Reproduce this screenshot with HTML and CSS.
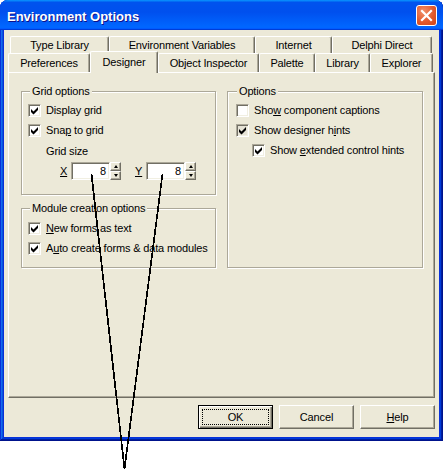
FILE: index.html
```html
<!DOCTYPE html>
<html lang="en">
<head>
<meta charset="utf-8">
<title>Environment Options</title>
<link rel="stylesheet" href="styles.css">
</head>
<body>
<div class="window">
  <div class="titlebar">
    <span class="title">Environment Options</span>
    <span class="close" aria-label="Close">
      <svg width="19" height="19" viewBox="0 0 19 19"><path d="M5 5 L14 14 M14 5 L5 14" stroke="#fff" stroke-width="2.2" stroke-linecap="square" fill="none"/></svg>
    </span>
  </div>
  <div class="body">
    <div class="tabrow back">
      <div class="tab w99">Type Library</div>
      <div class="tab w146">Environment Variables</div>
      <div class="tab w77">Internet</div>
      <div class="tab w100">Delphi Direct</div>
    </div>
    <div class="tabrow front">
      <div class="tab w82">Preferences</div>
      <div class="tab w68 sel">Designer</div>
      <div class="tab w101">Object Inspector</div>
      <div class="tab w56">Palette</div>
      <div class="tab w55">Library</div>
      <div class="tab w63">Explorer</div>
    </div>
    <div class="panel">
      <div class="col">
        <fieldset class="group g-grid">
          <legend>Grid options</legend>
          <div class="cbrow"><span class="cb on"><svg width="9" height="9" viewBox="2 2 9 9"><polygon points="3,5 5.5,7.5 10,3 10,6 5.5,10.5 3,8"/></svg></span><span>Display grid</span></div>
          <div class="cbrow"><span class="cb on"><svg width="9" height="9" viewBox="2 2 9 9"><polygon points="3,5 5.5,7.5 10,3 10,6 5.5,10.5 3,8"/></svg></span><span>Sna<u>p</u> to grid</span></div>
          <div class="gsize">Grid size</div>
          <div class="xyrow">
            <span class="lbl"><u>X</u></span>
            <div class="spinedit">
              <div class="edit">8</div>
              <div class="spin"><span class="sb up"></span><span class="sb down"></span></div>
            </div>
            <span class="lbl second"><u>Y</u></span>
            <div class="spinedit">
              <div class="edit">8</div>
              <div class="spin"><span class="sb up"></span><span class="sb down"></span></div>
            </div>
          </div>
        </fieldset>
        <fieldset class="group g-module">
          <legend>Module creation options</legend>
          <div class="cbrow"><span class="cb on"><svg width="9" height="9" viewBox="2 2 9 9"><polygon points="3,5 5.5,7.5 10,3 10,6 5.5,10.5 3,8"/></svg></span><span><u>N</u>ew forms as text</span></div>
          <div class="cbrow"><span class="cb on"><svg width="9" height="9" viewBox="2 2 9 9"><polygon points="3,5 5.5,7.5 10,3 10,6 5.5,10.5 3,8"/></svg></span><span>A<u>u</u>to create forms &amp; data modules</span></div>
        </fieldset>
      </div>
      <fieldset class="group g-options">
        <legend>Options</legend>
        <div class="cbrow"><span class="cb"></span><span>Sho<u>w</u> component captions</span></div>
        <div class="cbrow"><span class="cb on dim"><svg width="9" height="9" viewBox="2 2 9 9"><polygon points="3,5 5.5,7.5 10,3 10,6 5.5,10.5 3,8"/></svg></span><span>Show designer h<u>i</u>nts</span></div>
        <div class="cbrow indent"><span class="cb on"><svg width="9" height="9" viewBox="2 2 9 9"><polygon points="3,5 5.5,7.5 10,3 10,6 5.5,10.5 3,8"/></svg></span><span>Show <u>e</u>xtended control hints</span></div>
      </fieldset>
    </div>
    <div class="buttons">
      <div class="btn default">OK</div>
      <div class="btn">Cancel</div>
      <div class="btn"><span><u>H</u>elp</span></div>
    </div>
  </div>
</div>
<svg class="callout" width="443" height="475" viewBox="0 0 443 475">
  <line x1="91.5" y1="174" x2="124.5" y2="469"/>
  <line x1="162.5" y1="174" x2="124.5" y2="469"/>
</svg>
</body>
</html>
```
FILE: styles.css
```css
* { box-sizing: border-box; }

html, body {
  margin: 0;
  padding: 0;
  background: #fff;
}

body {
  position: relative;
  width: 443px;
  height: 475px;
  overflow: hidden;
  font-family: "Liberation Sans", Arial, sans-serif;
  font-size: 11px;
  letter-spacing: -0.15px;
  color: #000;
}

/* ---------- window frame ---------- */
.window {
  width: 443px;
  height: 441px;
  display: flex;
  flex-direction: column;
  padding-bottom: 4px;
  background: #0831d9;
  border-radius: 8px 8px 0 0;
  box-shadow:
    inset -1px -1px #00138c,
    inset 1px 1px #0831d9,
    inset -2px -2px #001ea0,
    inset 2px 2px #166aee,
    inset -3px -3px #003bda,
    inset 3px 3px #0855dd;
}

.titlebar {
  flex: none;
  height: 30px;
  display: flex;
  align-items: center;
  justify-content: space-between;
  padding: 1px 6px 0 7px;
  border-radius: 8px 8px 0 0;
  background: linear-gradient(180deg,
    #0997ff, #0053ee 8%, #0050ee 40%, #0066ff 88%, #0066ff 93%,
    #005bff 95%, #003dd7 96%, #003dd7);
}

.title {
  margin-top: 2px;
  font-family: "Liberation Sans", Arial, sans-serif;
  font-weight: bold;
  font-size: 13px;
  letter-spacing: 0;
  line-height: 14px;
  color: #fff;
  text-shadow: 1px 1px #0f1089;
}

.close {
  width: 21px;
  height: 21px;
  display: flex;
  align-items: center;
  justify-content: center;
  border: 1px solid #fff;
  border-radius: 3px;
  background: radial-gradient(circle at 35% 30%, #f1916a 0%, #e2592d 55%, #cf4418 100%);
}

/* ---------- dialog body ---------- */
.body {
  flex: 1;
  margin: 0 4px;
  padding: 6px 4px 8px;
  display: flex;
  flex-direction: column;
  background: #ece9d8;
}

/* ---------- tabs ---------- */
.tabrow {
  display: flex;
  flex: none;
}

.tabrow.back {
  height: 17px;
  margin-left: 2px;
}

.tabrow.front {
  height: 19px;
  align-items: flex-end;
}

.tab {
  flex: none;
  height: 100%;
  display: flex;
  align-items: center;
  justify-content: center;
  white-space: nowrap;
  background: #ece9d8;
  border-top: 1px solid #fff;
  border-left: 1px solid #fff;
  border-right: 1px solid #716f64;
  border-radius: 2px 2px 0 0;
  box-shadow: inset -1px 0 #aca899;
}

.front .tab { height: 19px; }

.tab.sel {
  position: relative;
  z-index: 2;
  height: 22px;
  margin-bottom: -1px;
  padding-bottom: 2px;
}

.w55 { width: 55px; }
.w56 { width: 56px; }
.w63 { width: 63px; }
.w68 { width: 68px; }
.w77 { width: 77px; }
.w82 { width: 82px; }
.w99 { width: 99px; }
.w100 { width: 100px; }
.w101 { width: 101px; }
.w146 { width: 146px; }

/* ---------- panel ---------- */
.panel {
  flex: none;
  height: 326px;
  padding: 12px 0 0 12px;
  display: grid;
  grid-template-columns: 195px 196px;
  column-gap: 11px;
  align-content: start;
  border: 1px solid;
  border-color: #fff #716f64 #716f64 #fff;
  box-shadow: inset -1px -1px #aca899;
}

.col {
  display: flex;
  flex-direction: column;
}

.group {
  margin: 0;
  min-width: 0;
  padding: 2px 6px 14px;
  border: 1px solid #aca899;
  box-shadow: inset 1px 1px #fff, 1px 1px #fff;
}

.group legend {
  margin-left: 2px;
  padding: 0 2px;
  line-height: 13px;
  background: #ece9d8;
}

.g-module {
  margin-top: 7px;
  padding-top: 3px;
  padding-bottom: 9px;
}

.g-options {
  padding-left: 8px;
}

.g-options legend { margin-left: 1px; }

/* ---------- checkboxes ---------- */
.cbrow {
  height: 20px;
  display: flex;
  align-items: center;
  gap: 5px;
  white-space: nowrap;
}

.cbrow.indent { padding-left: 16px; }

.cb {
  flex: none;
  width: 13px;
  height: 13px;
  display: flex;
  align-items: center;
  justify-content: center;
  background: #fff;
  border: 1px solid;
  border-color: #aca899 #fff #fff #aca899;
  box-shadow: inset 1px 1px #716f64, inset -1px -1px #f1efe2;
}

.cb.dim { background: #e6e3d6; }

.cb svg polygon { fill: #000; }

/* ---------- grid size spin edits ---------- */
.gsize {
  height: 21px;
  display: flex;
  align-items: center;
  padding-left: 18px;
}

.xyrow {
  height: 18px;
  margin-top: 1px;
  padding-left: 32px;
  display: flex;
  align-items: center;
}

.lbl { width: 11px; }
.lbl.second { margin-left: 14px; }

.spinedit {
  display: flex;
  height: 18px;
}

.edit {
  width: 39px;
  height: 18px;
  padding-right: 3px;
  display: flex;
  align-items: center;
  justify-content: flex-end;
  background: #fff;
  border: 1px solid;
  border-color: #aca899 #fff #fff #aca899;
  box-shadow: inset 1px 1px #716f64, inset -1px -1px #f1efe2;
}

.spin {
  width: 11px;
  display: flex;
  flex-direction: column;
}

.sb {
  flex: 1;
  display: flex;
  align-items: center;
  justify-content: center;
  background: #ece9d8;
  border: 1px solid;
  border-color: #fff #716f64 #716f64 #fff;
  box-shadow: inset -1px -1px #aca899;
}

.sb::after {
  content: "";
  width: 0;
  height: 0;
  border-style: solid;
  border-color: transparent;
}

.sb.up::after {
  border-width: 0 2.5px 3px;
  border-bottom-color: #000;
}

.sb.down::after {
  border-width: 3px 2.5px 0;
  border-top-color: #000;
}

/* ---------- buttons ---------- */
.buttons {
  flex: none;
  margin-top: 7px;
  display: flex;
  justify-content: flex-end;
  gap: 6px;
}

.btn {
  width: 75px;
  height: 24px;
  display: flex;
  align-items: center;
  justify-content: center;
  background: #ece9d8;
  border: 1px solid;
  border-color: #fff #716f64 #716f64 #fff;
  box-shadow: inset -1px -1px #aca899;
}

.btn.default {
  position: relative;
  border: 1px solid #000;
  box-shadow: inset 1px 1px #fff, inset -1px -1px #716f64, inset -2px -2px #aca899;
}

.btn.default::after {
  content: "";
  position: absolute;
  inset: 3px;
  border: 1px dotted #000;
}

/* ---------- callout lines ---------- */
.callout {
  position: absolute;
  left: 0;
  top: 0;
  pointer-events: none;
}

.callout line {
  stroke: #000;
  stroke-width: 1.7;
  shape-rendering: crispEdges;
}
```
